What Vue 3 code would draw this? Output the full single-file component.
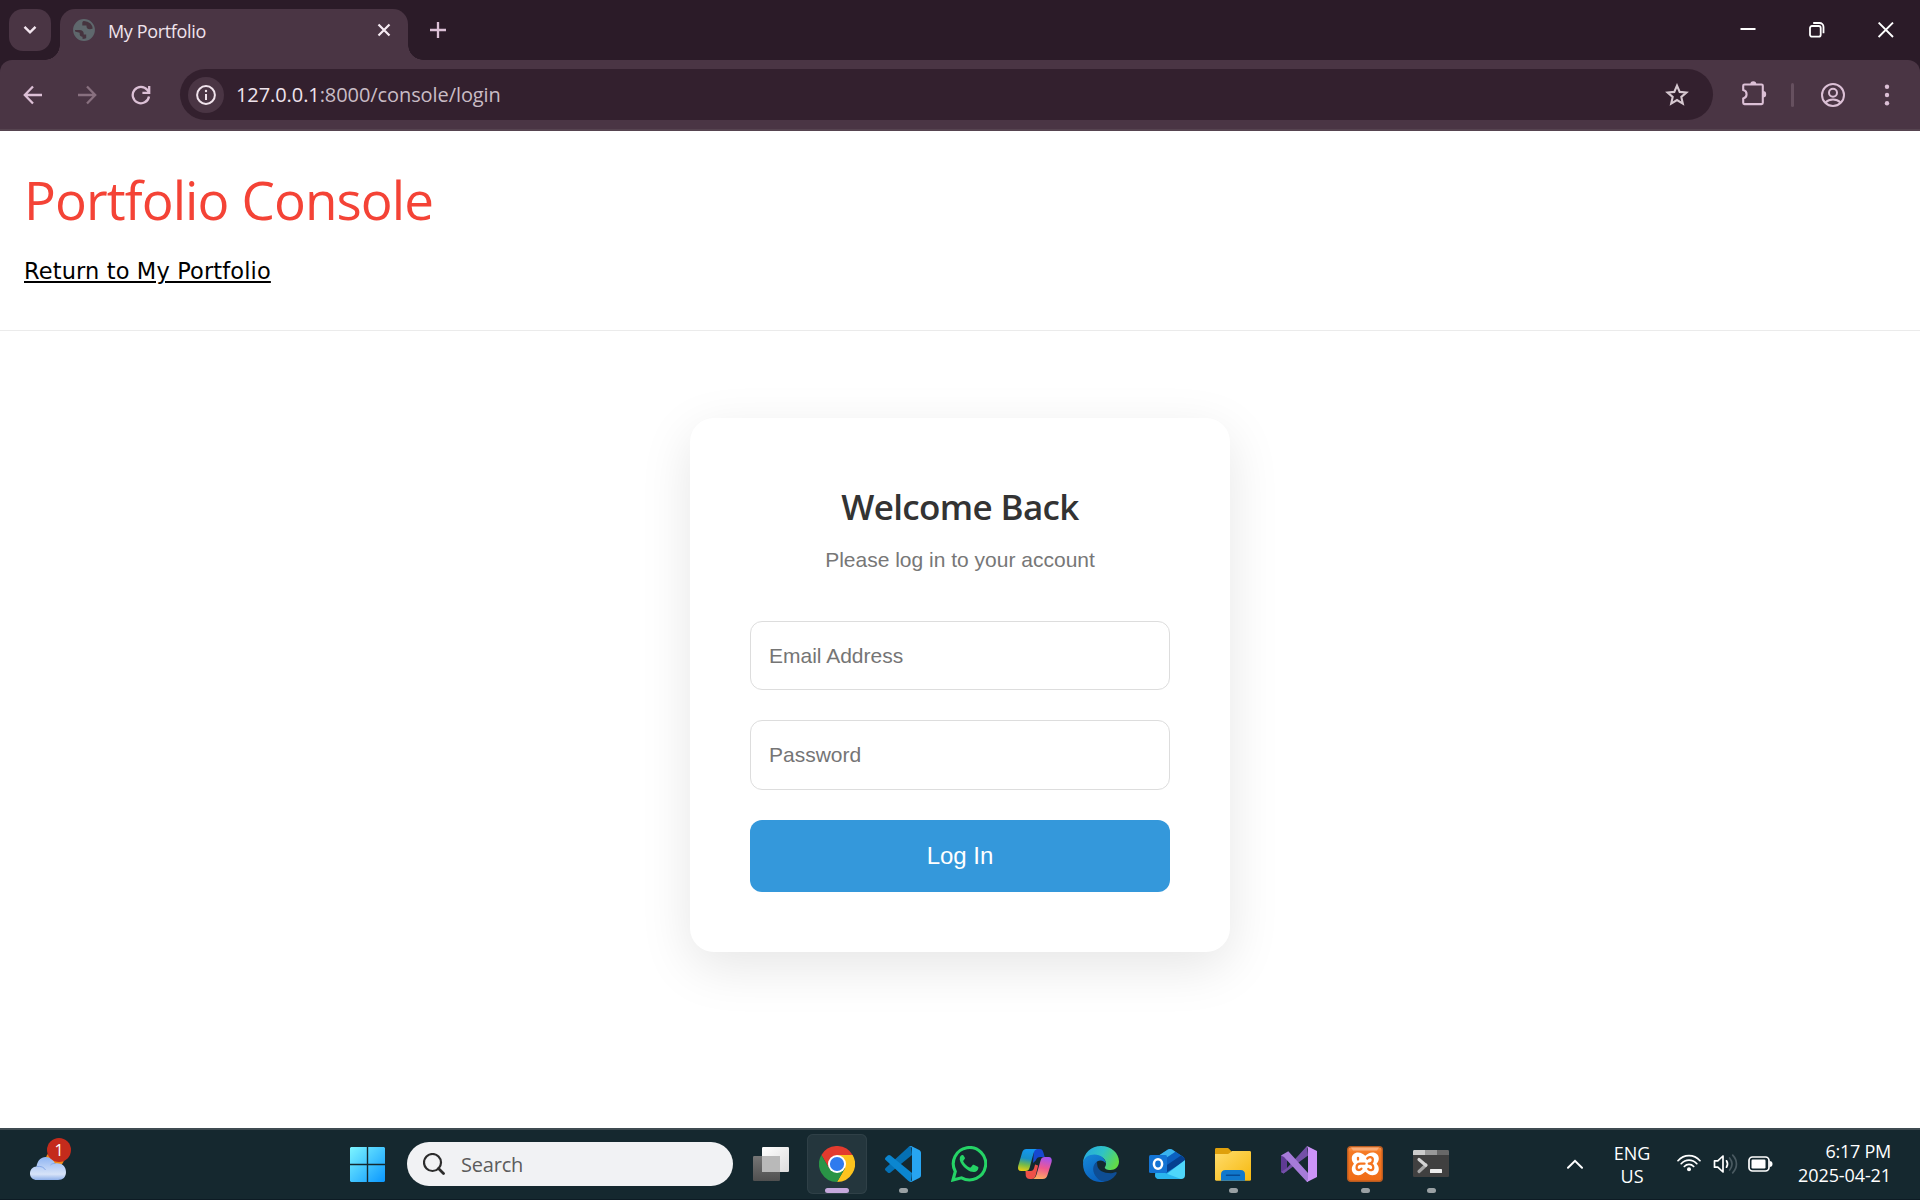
<script setup>
import { ref } from 'vue'

const email = ref('')
const password = ref('')

const apps = [
  { id: 'taskview' },
  { id: 'chrome', active: true },
  { id: 'vscode', running: true },
  { id: 'whatsapp' },
  { id: 'copilot' },
  { id: 'edge' },
  { id: 'outlook' },
  { id: 'explorer', running: true },
  { id: 'visualstudio' },
  { id: 'xampp', running: true },
  { id: 'terminal', running: true }
]
</script>

<template>
  <div class="screen">
    <!-- Browser tab strip -->
    <header class="tabstrip">
      <button class="tab-search" aria-label="Search tabs">
        <svg width="14" height="10" viewBox="0 0 14 10"><path d="M1.5 1.8 7 7.3l5.5-5.5" fill="none" stroke="#f3e6ef" stroke-width="2.4" /></svg>
      </button>
      <div class="tab">
        <svg class="globe" width="22" height="22" viewBox="0 0 22 22">
          <circle cx="11" cy="11" r="10" fill="#46343f" stroke="#5f686d" stroke-width="1.800" />
          <path d="M12.500 1C6.500 0 1.500 4 1 11h5.500c2.600 0 4.200 1.300 4.200 3.600v.9h2.500v3.800c-1 .5-1.700.5-2.700.5l.5 1.200c6 0 10-4.500 10-10 0-1 0-1.500-.3-2.500-.8 1.300-2 1.700-3.700 1.700-2.300 0-3.500-1-3.500-3v-.7H9.300V3.800c0-1.300 1.300-2.800 3.200-2.800z" fill="#5f686d" />
          <path d="M1.800 12.500c.4 4.500 3.400 7.500 7.700 8.200v-2.900c-1.700 0-2.800-1-2.800-2.800v-1.200z" fill="#5f686d" />
        </svg>
        <span class="tab-title">My Portfolio</span>
        <svg width="14" height="14" viewBox="0 0 14 14"><path d="M1.500 1.500 12.500 12.500M12.500 1.500 1.500 12.500" stroke="#f6ebf3" stroke-width="2.200" /></svg>
      </div>
      <svg class="new-tab" width="16" height="16" viewBox="0 0 16 16"><path d="M8 0v16M0 8h16" stroke="#dcc0d6" stroke-width="2.300" /></svg>
      <div class="window-controls">
        <svg width="16" height="16" viewBox="0 0 16 16"><path d="M.5 7h15" stroke="#fff" stroke-width="2" /></svg>
        <svg width="16" height="16" viewBox="0 0 16 16" fill="none" stroke="#fff" stroke-width="1.800"><rect x="1" y="4" width="10.700" height="10.700" rx="2" /><path d="M4.200 1h6.300a4 4 0 0 1 4 4v6.200" /></svg>
        <svg width="16" height="16" viewBox="0 0 16 16"><path d="M.6.6 15 15M15 .6.6 15" stroke="#fff" stroke-width="1.900" /></svg>
      </div>
    </header>

    <!-- Browser toolbar -->
    <div class="toolbar-back">
      <nav class="toolbar">
        <div class="nav-buttons">
          <svg width="20" height="20" viewBox="0 0 20 20" fill="none" stroke="#dcc0d6" stroke-width="2.300"><path d="M19 10H2.500M10 1.500 1.800 10l8.200 8.500" /></svg>
          <svg width="20" height="20" viewBox="0 0 20 20" fill="none" stroke="#88707f" stroke-width="2.300"><path d="M1 10h16.500M10 1.500l8.200 8.500-8.200 8.500" /></svg>
          <svg width="20" height="20" viewBox="0 0 20 20" fill="none" stroke="#dcc0d6" stroke-width="2.300"><path d="M18 11.500A8.200 8.200 0 1 1 16.400 5l1.800 2.500" /><path d="M18.200 1v6.800h-6.800" /></svg>
        </div>
        <div class="omnibox">
          <span class="site-info">
            <svg width="20" height="20" viewBox="0 0 20 20"><circle cx="10" cy="10" r="8.900" fill="none" stroke="#f0e3ec" stroke-width="2" /><path d="M10 9v6" stroke="#f0e3ec" stroke-width="2" /><circle cx="10" cy="6" r="1.200" fill="#f0e3ec" /></svg>
          </span>
          <span class="url"><b>127.0.0.1</b>:8000/console/login</span>
          <svg width="24" height="23" viewBox="0 0 24 23"><path d="M12 2.600 14.700 8.900l6.700.6-5.100 4.500 1.500 6.600-5.800-3.500-5.800 3.500 1.500-6.600-5.100-4.500 6.700-.6z" fill="none" stroke="#d6c8d0" stroke-width="2.100" /></svg>
        </div>
        <svg class="extensions" width="26" height="26" viewBox="0 0 26 26">
          <path d="M3.500 4.500h17a1.300 1.300 0 0 1 1.300 1.300v17a1.300 1.300 0 0 1-1.300 1.300h-17a1.300 1.300 0 0 1-1.300-1.300v-4.300c4.500-1 4.500-7.500 0-8.500V5.800a1.300 1.300 0 0 1 1.300-1.300z" fill="none" stroke="#dcc0d6" stroke-width="2.100" />
          <path d="M9.300 4.200a3 3 0 0 1 6 0zM22 11a3.200 3.200 0 0 1 0 6.400z" fill="#dcc0d6" />
        </svg>
        <i class="divider"></i>
        <svg class="profile" width="24" height="24" viewBox="0 0 24 24" fill="none" stroke="#dcc0d6" stroke-width="2"><circle cx="12" cy="12" r="11" /><circle cx="12" cy="9.700" r="4" /><path d="M4.500 19.500c4-4 11-4 15 0" /></svg>
        <svg class="menu" width="6" height="22" viewBox="0 0 6 22" fill="#dcc0d6"><circle cx="3" cy="2.700" r="2.200" /><circle cx="3" cy="11" r="2.200" /><circle cx="3" cy="19.300" r="2.200" /></svg>
      </nav>
    </div>

    <!-- Web page -->
    <main class="page">
      <div class="page-header">
        <h1>Portfolio Console</h1>
        <a href="#">Return to My Portfolio</a>
      </div>
      <form class="card" @submit.prevent>
        <h2>Welcome Back</h2>
        <p>Please log in to your account</p>
        <input v-model="email" type="email" placeholder="Email Address" />
        <input v-model="password" class="second" type="password" placeholder="Password" />
        <button type="submit">Log In</button>
      </form>
    </main>

    <!-- Windows taskbar -->
    <footer class="taskbar">
      <div class="weather">
        <svg width="36" height="30" viewBox="0 0 36 30">
          <defs><linearGradient id="cloud" x1="0" y1="0" x2="0" y2="1"><stop offset="0" stop-color="#8fb5f3" /><stop offset=".75" stop-color="#d7e3f8" /><stop offset="1" stop-color="#8fb0ea" /></linearGradient></defs>
          <circle cx="25" cy="8" r="9" fill="#f28a18" />
          <path d="M7 29C3 29 0 26.500 0 22.500S3 15.500 6.500 15.500C7.500 9.500 11 6 15.500 6c5 0 8 3 9.500 6.500 6-1 11 2.500 11 8.500 0 5-3 8-8 8z" fill="url(#cloud)" />
          <path d="M7 15.500c4-.6 7 .8 8.500 3.500M20.500 14c1.300-1.300 2.800-1.700 4.700-1.500" fill="none" stroke="#86a9e8" />
        </svg>
        <span class="badge">1</span>
      </div>

      <div class="center">
        <svg class="start" width="35" height="35" viewBox="0 0 35 35">
          <defs><linearGradient id="win" x1="0" y1="0" x2="1" y2="1"><stop offset="0" stop-color="#7df5ff" /><stop offset="1" stop-color="#0a97ff" /></linearGradient></defs>
          <path d="M1 0h15.800v16.800H0V1zM18.200 0H34l1 1v15.800H18.200zM0 18.200h16.800V35H1l-1-1zM18.200 18.200H35V34l-1 1H18.200z" fill="url(#win)" />
        </svg>
        <div class="search">
          <svg width="22" height="22" viewBox="0 0 22 22" fill="none" stroke="#2c2c2c"><circle cx="9.500" cy="9.500" r="8.500" stroke-width="2.200" /><path d="M15.500 15.500 20.500 20.500" stroke-width="2.800" stroke-linecap="round" /></svg>
          <span>Search</span>
        </div>
        <div class="apps">
          <div v-for="app in apps" :key="app.id" class="app" :class="{ active: app.active, running: app.running }">
            <svg v-if="app.id === 'taskview'" width="36" height="36" viewBox="0 0 36 36">
              <defs><linearGradient id="tv" x1="0" y1="0" x2="1" y2="1"><stop offset="0" stop-color="#fff" /><stop offset="1" stop-color="#dcdcdc" /></linearGradient><linearGradient id="tv2" x1="0" y1="0" x2="0" y2="1"><stop offset="0" stop-color="#757575" /><stop offset="1" stop-color="#505050" /></linearGradient></defs>
              <rect y="10" width="27" height="25" rx="1.200" fill="url(#tv2)" />
              <rect x="9" y="1" width="27" height="25" rx="1.200" fill="url(#tv)" />
              <path d="M9 10h18v16H9z" fill="#b9b9b9" />
            </svg>

            <svg v-else-if="app.id === 'chrome'" width="36" height="36" viewBox="0 0 36 36">
              <path d="M2.400 9A18 18 0 0 1 33.600 9H18L10.200 22.500z" fill="#e33b2e" />
              <path d="M33.600 9A18 18 0 0 1 18 36l7.800-13.500L18 9z" fill="#fcc31e" />
              <path d="M18 36A18 18 0 0 1 2.400 9l7.800 13.500h15.600z" fill="#299446" />
              <circle cx="18" cy="18" r="9" fill="#fff" />
              <circle cx="18" cy="18" r="7.100" fill="#2f7bee" />
            </svg>

            <svg v-else-if="app.id === 'vscode'" width="36" height="36" viewBox="0 0 36 36">
              <path d="M26 0 27 9 5.500 26.500c-1 .8-2 .7-2.800 0L.6 24.500c-.8-.8-.8-1.800 0-2.600L23.500 1z" fill="#0570b4" />
              <path d="M26 36 27 27 5.500 9.500c-1-.8-2-.7-2.800 0L.6 11.500c-.8.800-.8 1.800 0 2.600L23.500 35z" fill="#0b86d0" />
              <path d="M26.700.3 34.200 3.900c1.100.5 1.800 1.600 1.800 2.800v22.600c0 1.300-.7 2.300-1.800 2.800l-7.500 3.600c-1.200.5-2.200.3-3.200-.7 1.300 1.200 3.500.3 3.500-1.600V2.600c0-1.900-2.200-2.800-3.500-1.600 1-1 2-1.200 3.200-.7z" fill="#27a5f2" />
            </svg>

            <svg v-else-if="app.id === 'whatsapp'" width="36" height="36" viewBox="0 0 36 36">
              <path d="M2 34l2.300-8.500A16.200 16.200 0 1 1 10.500 31.800z" fill="none" stroke="#25d366" stroke-width="3.100" />
              <path d="M12.600 9.800c-.4-.8-.7-.8-1.200-.8-1 0-3 1.400-2.700 4.400.4 3.300 3.300 7 6.600 9.700 3.200 2.500 5.600 3.100 7.800 3 2-.1 4-1.800 4.200-3.600.2-1.300.1-1.500-.5-1.800l-4-1.900c-.6-.2-.9-.1-1.300.4l-1.600 2c-.4.4-.7.4-1.200.2-2.700-1.200-4.900-3.100-6.300-5.700-.3-.5-.2-.8.100-1.200l1.300-1.700c.2-.3.300-.7.100-1.100z" fill="#25d366" />
            </svg>

            <svg v-else-if="app.id === 'copilot'" width="36" height="36" viewBox="0 0 36 36">
              <defs>
                <linearGradient id="cpA" x1=".3" y1="0" x2=".15" y2="1"><stop offset="0" stop-color="#1497ef" /><stop offset=".4" stop-color="#1791c8" /><stop offset=".7" stop-color="#76bb48" /><stop offset="1" stop-color="#f2ce10" /></linearGradient>
                <linearGradient id="cpB" x1=".6" y1="0" x2=".4" y2="1"><stop offset="0" stop-color="#a452f2" /><stop offset=".5" stop-color="#ef5890" /><stop offset="1" stop-color="#ffab62" /></linearGradient>
              </defs>
              <path d="M17 3h5.500c2.300 0 3.200 1 3.900 3.500l1.300 4.500h-4.200c-2.500 0-4 1-4.800 3.500L16 17z" fill="#1648d0" />
              <path d="M8.500 25h5.300c1.700 0 2.700-1 3.300-3l1-3.500 3 1-2.300 9.500c-.8 2.800-1.800 4-4.300 4h-1.700c-2.200 0-3.400-1-4-3z" fill="#ef5048" />
              <path d="M9.500 3H20c-2 .7-2.800 2-3.600 4.700L12.700 21.500c-.8 2.700-2 3.500-4.200 3.500H4.300C1.500 25 .5 23 1.200 20L5 7c.8-2.800 2-4 4.500-4z" fill="url(#cpA)" />
              <path d="M25.500 33h-9.500c2-.7 2.800-2 3.600-4.700l4-13.800c.8-2.700 2-3.500 4.200-3.500h3.700c2.800 0 3.800 2 3.100 5L30.500 29c-.8 2.800-2 4-5 4z" fill="url(#cpB)" />
            </svg>

            <svg v-else-if="app.id === 'edge'" width="36" height="36" viewBox="0 0 36 36">
              <defs>
                <linearGradient id="edA" x1="0" y1=".2" x2="1" y2=".6"><stop offset="0" stop-color="#26a7e0" /><stop offset=".5" stop-color="#2fc3c5" /><stop offset="1" stop-color="#62dc45" /></linearGradient>
                <linearGradient id="edB" x1="0" y1="0" x2=".5" y2="1"><stop offset="0" stop-color="#1688d8" /><stop offset="1" stop-color="#0a61bd" /></linearGradient>
              </defs>
              <path d="M0 17C.5 7 8 0 18 0c10.500 0 18 7.500 18 15.500 0 5-3.700 8.500-8.500 8.500-4 0-6.500-1.500-5.500-3 1.800-2.500 1.200-6.500-2-9C13.500 7.500 3.500 9 0 17z" fill="url(#edA)" />
              <path d="M0 18C0 11.500 6 8.500 11.500 8.500c6 0 11 4 11.300 8.800-2-2.800-5.600-3.800-8.300-2-4 2.700-3.700 10 .7 14.300 1.500 1.500 4 3 6.800 3.500l-1 2.700C9 37.500 0 29 0 18z" fill="url(#edB)" />
              <path d="M14 15.600c-5 3.500-5.200 11 .2 16.400 1.800 2 4.500 3.500 7 3.700 5-.5 9-3 11.500-6.700 1-1.500 1.300-2.400.7-2.800-1-.5-2.300 1-5.400 1C20 27.200 15.500 24 14.500 20.500c-.4-1.800-.5-3.500-.5-4.900z" fill="#0e4d94" />
            </svg>

            <svg v-else-if="app.id === 'outlook'" width="36" height="36" viewBox="0 0 36 36">
              <path d="M6 12 19 3.600c1.300-.8 2.700-.8 4 0L35 11.500v8L14 33H10a4 4 0 0 1-4-4z" fill="#168bd8" />
              <path d="M8 10.700 19 3.600c1.300-.8 2.700-.8 4 0l3.500 2.300L12 15z" fill="#39b3ee" />
              <path d="M26.500 5.800 35 11.500 14 25l-2-9.500z" fill="#0c60c0" />
              <path d="M32 9.500 35 11.500c1.400 1 1.300 3 0 4L17 27l-2-6z" fill="#064090" />
              <path d="M36 14v15a4 4 0 0 1-4 4H11z" fill="#4ed6fa" />
              <path d="M8 24 32 33H10c-2.500 0-4-1.800-4-4z" fill="#2ab5ee" />
              <rect y="9" width="18" height="18" rx="1.500" fill="#1474d4" />
              <ellipse cx="9" cy="18" rx="4.100" ry="4.700" fill="none" stroke="#fff" stroke-width="2.500" />
            </svg>

            <svg v-else-if="app.id === 'explorer'" width="36" height="36" viewBox="0 0 36 36">
              <defs><linearGradient id="fd" x1="0" y1="0" x2="1" y2="1"><stop offset="0" stop-color="#ffdc6c" /><stop offset="1" stop-color="#f7b90e" /></linearGradient></defs>
              <path d="M0 3.500C0 2.500.5 2 1.500 2H12c1 0 1.600.3 2.200 1L17 6v5H0z" fill="#dfa00c" />
              <path d="M0 8h12c1.300 0 2-.3 3-1.200l1.500-1.300c.4-.4.800-.5 1.500-.5h16.500c1 0 1.500.5 1.500 1.500V33.500c0 .8-.4 1.200-1.200 1.200H1.200c-.8 0-1.200-.4-1.200-1.200z" fill="url(#fd)" />
              <path d="M6 34.700V28.500c0-3 1.500-4.500 4.500-4.500h15c3 0 4.500 1.500 4.500 4.500v6.200z" fill="#1078cc" />
              <path d="M11.500 29.200h13" stroke="#064b94" stroke-width="1.500" stroke-linecap="round" />
            </svg>

            <svg v-else-if="app.id === 'visualstudio'" width="36" height="36" viewBox="0 0 36 36">
              <path d="M0 9.500 2.500 8.500 6 11v14l-3.500 2.500L0 26z" fill="#5f3b94" />
              <path d="M26 0 27 9.500 6 25 2.500 27.500 0 26 6 22z" fill="#7450a8" />
              <path d="M0 9.500 7.300 5.200 27 27v9h-1L3 11z" fill="#a67bd9" />
              <path d="M26 0 36 5v26L26 36l1-3V3z" fill="#cc93f8" />
            </svg>

            <svg v-else-if="app.id === 'xampp'" width="36" height="36" viewBox="0 0 36 36">
              <defs><linearGradient id="xa" x1="0" y1="0" x2="0" y2="1"><stop offset="0" stop-color="#fb9852" /><stop offset=".15" stop-color="#f57a25" /><stop offset="1" stop-color="#f06c17" /></linearGradient></defs>
              <rect x=".7" y=".7" width="34.600" height="34.600" rx="3" fill="url(#xa)" stroke="#b85b20" stroke-width="1.400" />
              <path d="M4 1.500h28L30 4.500H6z" fill="#fbad78" />
              <path d="M11 6.500c3.200 0 5 1.500 7.300 3.300C20.500 8 22.500 6.500 25.500 6.500c3.700 0 6.300 2.500 6.300 6 0 2-.8 3.700-2.200 5.200 1.400 1.500 2.200 3.200 2.200 5.300 0 3.700-2.500 6.200-6.200 6.200-3 0-5-1.500-7.300-3.400-2.300 1.900-4.200 3.400-7.200 3.400-3.700 0-6.300-2.500-6.300-6.200 0-2.100.8-3.800 2.200-5.300-1.400-1.500-2.200-3.200-2.200-5.200 0-3.500 2.600-6 6.200-6z" fill="#fff" />
              <path d="M11 11.800v1.700M17.500 17.700H13.500c-2.500 0-3.900 1.800-3.900 3.800 0 3 3 3.200 4.800 1.200M20.300 12.500c1.500-2 5.500-1.800 5.500 1.200 0 2-1.600 3.800-4 4 2.600.2 4.500 1.800 4.500 4 0 2.800-3.300 3.200-5 1.200" fill="none" stroke="#f57420" stroke-width="2.300" stroke-linecap="round" stroke-linejoin="round" />
            </svg>

            <svg v-else width="36" height="36" viewBox="0 0 36 36">
              <path d="M0 9h36v20.500c0 1-.5 1.500-1.500 1.500h-33C.5 31 0 30.500 0 29.500z" fill="#404040" />
              <path d="M0 9V5.500C0 4.500.5 4 1.500 4H12v5z" fill="#cbcbcb" />
              <path d="M12 4h12v5H12z" fill="#999" />
              <path d="M24 4h10.500c1 0 1.500.5 1.500 1.500V9H24z" fill="#686868" />
              <path d="M6 25.500 13 19" stroke="#a5a5a5" stroke-width="3.200" stroke-linecap="round" />
              <path d="M6 13.500 12.800 19.200" stroke="#d5d5d5" stroke-width="3.200" stroke-linecap="round" />
              <rect x="17" y="23" width="12" height="4" rx=".6" fill="#ececec" />
            </svg>
          </div>
        </div>
      </div>

      <div class="tray">
        <svg class="chevron" width="16" height="10" viewBox="0 0 16 10"><path d="M1 8.700 8 1.800l7 6.900" fill="none" stroke="#fff" stroke-width="2" stroke-linecap="round" /></svg>
        <div class="lang"><span>ENG</span><span>US</span></div>
        <svg class="wifi" width="24" height="18" viewBox="0 0 24 18" fill="none" stroke="#fff" stroke-width="1.700" stroke-linecap="round">
          <path d="M1 6.700c6-6.800 16-6.800 22 0M4.200 9.700c4.400-4.800 11.200-4.800 15.600 0M7.300 12.500c2.700-2.900 6.700-2.900 9.400 0" />
          <circle cx="12" cy="15.200" r="2" fill="#fff" stroke="none" />
        </svg>
        <svg class="speaker" width="25" height="22" viewBox="0 0 25 22" fill="none" stroke-width="1.700" stroke-linecap="round" stroke-linejoin="round">
          <path d="M1.500 7.800h3.300L10 3v16l-5.200-4.800H1.500z" stroke="#fff" />
          <path d="M13.500 7.800c1.300 2 1.300 4.400 0 6.400" stroke="#fff" />
          <path d="M16.600 5c3 3.700 3 8.300 0 12M19.700 2.200c5 5.300 5 12.300 0 17.600" stroke="#4a5a61" />
        </svg>
        <svg class="battery" width="25" height="16" viewBox="0 0 25 16">
          <rect x="1" y="1" width="20" height="14" rx="3.500" fill="none" stroke="#fff" stroke-width="1.700" />
          <rect x="3.500" y="3.500" width="14" height="9" rx="1.200" fill="#fff" />
          <path d="M21.500 5c2 0 3 1 3 3s-1 3-3 3z" fill="#fff" />
        </svg>
        <div class="clock"><span class="time">6:17 PM</span><span>2025-04-21</span></div>
      </div>
    </footer>
  </div>
</template>

<style>
body {
  margin: 0;
  background: #fff;
}
</style>

<style scoped>
.screen {
  width: 1920px;
  height: 1200px;
  display: flex;
  flex-direction: column;
  overflow: hidden;
  font-family: "Open Sans", "Noto Sans", sans-serif;
}
svg {
  display: block;
  flex: none;
}

/* Tab strip */
.tabstrip {
  height: 60px;
  flex: none;
  display: flex;
  align-items: flex-start;
  background: #2b1b28;
  padding-left: 9px;
}
.tab-search {
  width: 42px;
  height: 42px;
  margin: 9px 9px 0 0;
  padding: 0;
  border: 0;
  border-radius: 14px;
  background: #4a3544;
  display: flex;
  align-items: center;
  justify-content: center;
}
.tab {
  position: relative;
  box-sizing: border-box;
  width: 348px;
  height: 51px;
  margin-top: 9px;
  padding: 0 17px 9px 13px;
  border-radius: 15px 15px 0 0;
  background: #4a3544;
  display: flex;
  align-items: center;
}
.tab::before,
.tab::after {
  content: "";
  position: absolute;
  bottom: 0;
  width: 15px;
  height: 15px;
}
.tab::before {
  left: -15px;
  background: radial-gradient(circle at 0 0, transparent 14.5px, #4a3544 15px);
}
.tab::after {
  right: -15px;
  background: radial-gradient(circle at 100% 0, transparent 14.5px, #4a3544 15px);
}
.tab-title {
  flex: 1;
  margin-left: 13px;
  padding-top: 1px;
  font-size: 18px;
  line-height: 26px;
  letter-spacing: -0.35px;
  color: #f0e3ec;
}
.new-tab {
  margin: 22px 0 0 22px;
}
.window-controls {
  margin: 22px 26px 0 auto;
  display: flex;
  gap: 53px;
}

/* Toolbar */
.toolbar-back {
  flex: none;
  background: #2b1b28;
}
.toolbar {
  box-sizing: border-box;
  height: 71px;
  border-radius: 12px 12px 0 0;
  border-bottom: 2px solid #564450;
  background: #4a3544;
  display: flex;
  align-items: center;
  padding: 0 30px 0 23px;
}
.nav-buttons {
  width: 157px;
  display: flex;
  gap: 34px;
}
.omnibox {
  box-sizing: border-box;
  width: 1533px;
  height: 51px;
  border-radius: 26px;
  background: #33202e;
  display: flex;
  align-items: center;
  padding: 0 24px 0 8px;
}
.site-info {
  width: 36px;
  height: 36px;
  border-radius: 50%;
  background: #4a3544;
  display: flex;
  align-items: center;
  justify-content: center;
}
.url {
  flex: 1;
  margin-left: 12px;
  font-size: 20px;
  line-height: 30px;
  letter-spacing: -0.08px;
  color: #c9bcc5;
}
.url b {
  font-weight: 400;
  color: #efe3ec;
}
.extensions {
  margin: 0 0 3px 28px;
}
.divider {
  width: 3px;
  height: 24px;
  margin-left: 24px;
  border-radius: 2px;
  background: #66505f;
}
.profile {
  margin-left: 27px;
}
.menu {
  margin-left: 39px;
}

/* Page */
.page {
  flex: 1;
  display: flex;
  flex-direction: column;
  align-items: center;
  background: #fff;
}
.page-header {
  box-sizing: border-box;
  width: 100%;
  height: 200px;
  padding: 33px 24px 0;
  border-bottom: 1px solid #ebebeb;
}
h1 {
  margin: 0 0 17px;
  font-size: 53px;
  line-height: 72px;
  font-weight: 400;
  letter-spacing: -0.9px;
  color: #f44336;
}
.page-header a {
  display: inline-block;
  font-family: "DejaVu Sans", sans-serif;
  font-size: 22.5px;
  line-height: 36px;
  letter-spacing: 0.13px;
  color: #000;
  text-decoration-thickness: 2px;
  text-underline-offset: 2px;
}
.card {
  box-sizing: border-box;
  width: 540px;
  height: 534px;
  margin-top: 87px;
  padding: 62px 60px 60px;
  border-radius: 24px;
  background: #fff;
  box-shadow: 0 15px 52px rgba(0, 0, 0, 0.1);
  display: flex;
  flex-direction: column;
  font-family: "Liberation Sans", Arial, sans-serif;
}
h2 {
  margin: 0;
  text-align: center;
  font-family: "Open Sans", sans-serif;
  font-size: 35px;
  line-height: 54px;
  font-weight: 600;
  letter-spacing: -0.65px;
  color: #333;
}
.card p {
  margin: 11px 0 46px;
  text-align: center;
  font-size: 21px;
  line-height: 30px;
  color: #777;
}
.card input {
  box-sizing: border-box;
  height: 69px;
  margin: 0 0 30px;
  padding: 0 18px;
  border: 1px solid #ddd;
  border-radius: 12px;
  outline: 0;
  background: #fff;
  font: 21px "Liberation Sans", Arial, sans-serif;
}
.card input.second {
  height: 70px;
}
.card input::placeholder {
  color: #757575;
}
.card button {
  height: 72px;
  padding: 0;
  border: 0;
  border-radius: 12px;
  background: #3498db;
  color: #fff;
  font: 24px "Liberation Sans", Arial, sans-serif;
}

/* Taskbar */
.taskbar {
  box-sizing: border-box;
  height: 72px;
  flex: none;
  border-top: 2px solid #3f4b51;
  border-bottom: 1px solid #0d1b24;
  background: #15282f;
  display: flex;
  align-items: flex-start;
  color: #fff;
}
.weather {
  position: relative;
  width: 320px;
  padding: 21px 0 0 30px;
  box-sizing: border-box;
}
.badge {
  position: absolute;
  left: 47px;
  top: 8px;
  width: 24px;
  height: 24px;
  border-radius: 50%;
  background: #c42b1c;
  text-align: center;
  font-size: 16px;
  line-height: 24px;
}
.center {
  display: flex;
  align-items: flex-start;
}
.start {
  margin: 17px 22px 0 30px;
}
.search {
  box-sizing: border-box;
  width: 326px;
  height: 44px;
  margin-top: 12px;
  padding-left: 16px;
  border-radius: 22px;
  background: #f1f2f4;
  display: flex;
  align-items: center;
  gap: 16px;
  font-size: 20px;
  letter-spacing: -0.2px;
  color: #5c5c5c;
}
.apps {
  display: flex;
  gap: 6px;
  margin: 4px 0 0 8px;
}
.app {
  position: relative;
  box-sizing: border-box;
  width: 60px;
  height: 60px;
  padding: 12px;
  border-radius: 6px;
}
.app.active {
  background: #24363d;
  box-shadow: inset 0 0 0 1px #2f4047;
}
.app.active::after,
.app.running::after {
  content: "";
  position: absolute;
  left: 26px;
  bottom: 1px;
  width: 9px;
  height: 5px;
  border-radius: 3px;
  background: #9aa1a4;
}
.app.active::after {
  left: 18px;
  width: 24px;
  background: #c5a8dc;
}
.tray {
  margin-left: auto;
  padding-right: 29px;
  display: flex;
  align-items: flex-start;
  font-size: 18px;
}
.chevron {
  margin: 29px 31px 0 0;
}
.lang {
  width: 36px;
  margin: 12px 27px 0 0;
  display: flex;
  flex-direction: column;
  align-items: center;
  line-height: 23px;
}
.wifi {
  margin: 24px 12px 0 0;
}
.speaker {
  margin: 23px 10px 0 0;
}
.battery {
  margin: 26px 25px 0 0;
}
.clock {
  display: flex;
  flex-direction: column;
  align-items: flex-end;
  padding-top: 9px;
  line-height: 24px;
  letter-spacing: -0.1px;
}
.time {
  letter-spacing: -0.25px;
}
</style>
